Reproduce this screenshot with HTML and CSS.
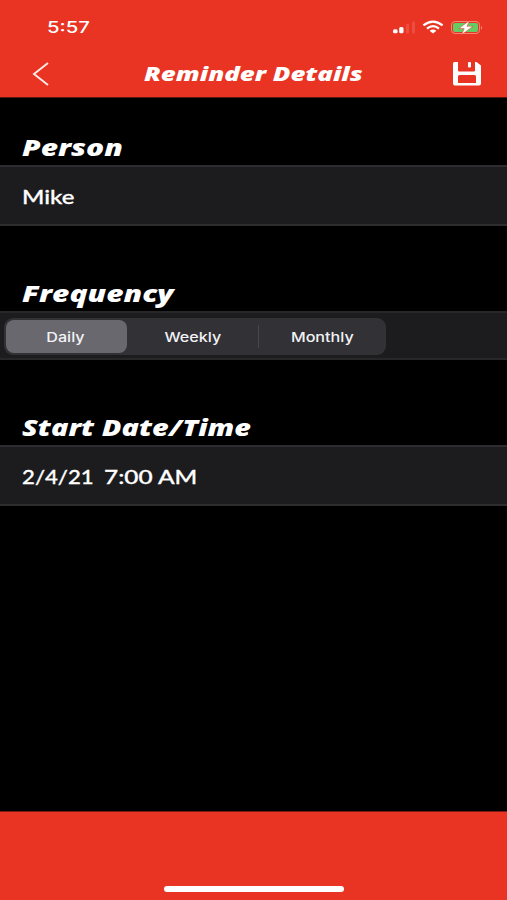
FILE: index.html
```html
<!DOCTYPE html>
<html lang="en">
<head>
<meta charset="utf-8">
<title>Reminder Details</title>
<link rel="stylesheet" href="styles.css">
</head>
<body>
<div class="screen">
  <header class="top">
    <div class="status">
      <span class="time wide">5:57</span>
      <svg class="indicators" width="92" height="20" viewBox="0 0 92 20">
        <g fill="#fff"><rect x="2" y="10.3" width="4.6" height="4" rx="1.5"/><rect x="8.2" y="8" width="4.3" height="6.3" rx="1.5"/></g>
        <g fill="#fff" opacity=".12"><rect x="15" y="5" width="3" height="9.5" rx="1"/><rect x="21" y="2.5" width="3" height="12" rx="1"/></g>
        <g fill="none" stroke="#fff" stroke-width="2.2"><path d="M32.4 6.4Q42 -1.2 51.6 6.4"/><path d="M36 9.6Q42 4.7 48 9.6"/></g>
        <path d="M38.6 11.7Q42 9.2 45.4 11.7L42 14.6Z" fill="#fff"/>
        <rect x="60.5" y="2.5" width="28" height="12" rx="3.5" fill="none" stroke="#f5a08f" stroke-opacity=".75"/>
        <rect x="62" y="4" width="25" height="9" rx="2" fill="#65cc63"/>
        <path d="M90 7v3.5q1-.5 1-1.75T90 7Z" fill="#f5a08f"/>
        <path d="M78.6 1.4L67.8 9.6H73.2L70.6 15.8L82 7.3H76Z" fill="#fff" stroke="#e83323" stroke-width=".5"/>
      </svg>
    </div>
    <div class="nav">
      <svg class="back" width="18" height="26" viewBox="0 0 18 26"><path d="M16 2L2 13L16 24" fill="none" stroke="#fff" stroke-opacity=".9" stroke-width="1.9"/></svg>
      <h1 class="title wide">Reminder Details</h1>
      <svg class="save" width="30" height="26" viewBox="0 0 30 26"><path fill="#fff" fill-rule="evenodd" d="M2.5 1H6v8.5q0 1 1 1h15q1 0 1-1V1h1.5L29 4.5V22.5q0 2-2 2H3q-2 0-2-2V2.5Q1 1 2.5 1ZM7.5 14Q6 14 6 15.5V22H24V15.5Q24 14 22.5 14Z"/><rect x="16" y="1" width="3" height="5.5" rx="1" fill="#fff"/></svg>
    </div>
  </header>
  <main class="form">
    <section class="group person">
      <h2 class="label"><span class="wide w-person">Person</span></h2>
      <div class="row"><span class="wide w-mike">Mike</span></div>
    </section>
    <section class="group frequency">
      <h2 class="label"><span class="wide w-frequency">Frequency</span></h2>
      <div class="row short">
        <div class="segments">
          <div class="segment selected"><span class="wide">Daily</span></div>
          <div class="segment"><span class="wide">Weekly</span></div>
          <div class="segment divided"><span class="wide">Monthly</span></div>
        </div>
      </div>
    </section>
    <section class="group start">
      <h2 class="label"><span class="wide w-start">Start Date/Time</span></h2>
      <div class="row"><span class="wide w-date">2/4/21</span><span class="wide w-hour">7:00 AM</span></div>
    </section>
  </main>
  <footer class="bottom"><div class="home"></div></footer>
</div>
</body>
</html>
```
FILE: styles.css
```css
* { box-sizing: border-box; }
body { margin: 0; background: #000; color: #fff; font-family: Lato, "Liberation Sans", sans-serif; }
h1, h2 { margin: 0; }
.screen { width: 507px; height: 900px; display: flex; flex-direction: column; overflow: hidden; }
.top { height: 98px; background: #e93424; border-bottom: 1px solid #5c1610; }
.status { height: 54px; display: flex; justify-content: space-between; align-items: center; padding: 0 24px 0 47px; }
.wide { display: inline-block; white-space: pre; transform-origin: left center; }
.time { font: 500 16px/20px Inter, sans-serif; transform: scaleX(1.27); }
.indicators { margin-top: 3px; }
.nav { height: 40px; display: flex; align-items: center; justify-content: space-between; padding: 0 25px 0 32px; }
.title { font: italic 800 19px/26px "Open Sans", sans-serif; transform-origin: center; transform: translateX(2px) scaleX(1.36); }
.form { flex: 1; }
.person { padding-top: 35px; }
.frequency { padding-top: 53px; }
.start { padding-top: 53px; }
.label { height: 32px; padding-left: 22px; font: italic 800 22px/28px "Open Sans", sans-serif; }
.row { height: 61px; background: #1c1c1e; border-top: 2px solid #2d2d2f; border-bottom: 2px solid #2d2d2f; padding: 0 22px; display: flex; align-items: center; font-size: 20px; font-weight: 500; -webkit-text-stroke: .3px #fff; }
.short { height: 49px; padding: 2px 4px 0; -webkit-text-stroke: 0; border-color: #272729; }
.w-person, .w-frequency { transform: scaleX(1.36); }
.w-start { transform: scaleX(1.31); }
.w-mike { transform: scaleX(1.2); }
.w-date { width: 82px; transform: scaleX(1.11); }
.w-hour { transform: scaleX(1.22); }
.segments { width: 382px; height: 37px; background: #313136; border-radius: 9px; display: grid; grid-template-columns: 124px 130px 128px; }
.segment { display: flex; align-items: center; justify-content: center; font: 500 13px/18px Inter, sans-serif; color: #f2f2f4; }
.segment .wide { transform-origin: center; transform: scaleX(1.24); }
.selected { background: #68686e; border-radius: 8px; margin: 2px 1px 2px 2px; padding-right: 2px; }
.divided { border-left: 1px solid #47474c; margin: 7px 0; }
.bottom { height: 89px; background: #e93424; border-top: 1px solid #7b1d14; display: flex; justify-content: center; align-items: flex-end; padding: 0 0 8px 1px; }
.home { width: 180px; height: 6px; border-radius: 3px; background: #fff; }
```
